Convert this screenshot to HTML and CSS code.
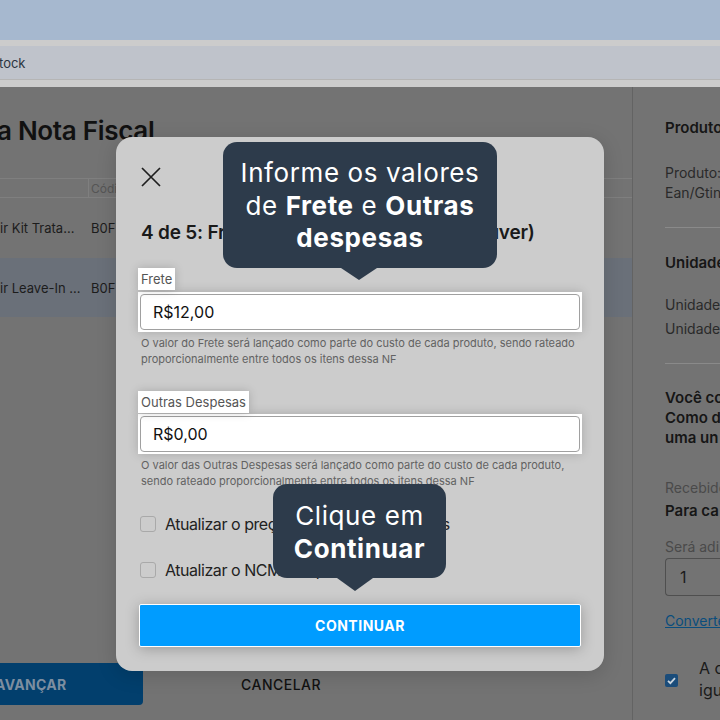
FILE: index.html
```html
<!DOCTYPE html>
<html lang="pt-BR">
<head>
<meta charset="utf-8">
<title>Nota Fiscal</title>
<link rel="stylesheet" href="styles.css">
</head>
<body>
<div class="topbar"></div>
<div class="tabstrip"><span class="tab-text">tock</span></div>
<div class="app">
  <main class="main">
    <h1 class="page-title">a Nota Fiscal</h1>
    <div class="table">
      <div class="trow thead">
        <div class="c1"></div>
        <div class="c2">Códi</div>
      </div>
      <div class="trow">
        <div class="c1">ir Kit Trata...</div>
        <div class="c2">B0F</div>
      </div>
      <div class="trow selected">
        <div class="c1">ir Leave-In ...</div>
        <div class="c2">B0F</div>
      </div>
    </div>
    <div class="bottombar">
      <div class="btn-advance"><span>AVANÇAR</span></div>
      <div class="btn-cancel">CANCELAR</div>
    </div>
  </main>
  <aside class="side">
    <div class="s-bold s-first">Produto</div>
    <div class="s-text s-gap25">Produto:</div>
    <div class="s-text">Ean/Gtin</div>
    <div class="s-hr"></div>
    <div class="s-bold s-gap25">Unidade</div>
    <div class="s-text s-gap22">Unidade</div>
    <div class="s-text s-gap4">Unidade</div>
    <div class="s-hr"></div>
    <div class="s-bold s-gap24">Você co<br>Como d<br>uma un</div>
    <div class="s-gray s-gap30">Recebido</div>
    <div class="s-bold s-gap3">Para ca</div>
    <div class="s-gray s-gap17">Será adi</div>
    <div class="s-input">1</div>
    <div class="s-link">Converte</div>
    <div class="s-check">
      <span class="s-checkbox"><svg width="13" height="13" viewBox="0 0 13 13"><path d="M3 6.8 L5.4 9.1 L10 4.2" fill="none" stroke="#c9d4de" stroke-width="1.8"/></svg></span>
      <span class="s-check-text">A c<br>igu</span>
    </div>
  </aside>
</div>

<div class="modal">
  <div class="close"><svg width="20" height="20" viewBox="0 0 20 20"><path d="M1 1 L19 19 M19 1 L1 19" stroke="#1e1e1e" stroke-width="1.7" fill="none"/></svg></div>
  <div class="m-title">4 de 5: Frete e Outras Despesas (se houver)</div>

  <div class="m-label m-label-first">Frete</div>
  <div class="m-input-wrap"><div class="m-input">R$12,00</div></div>
  <div class="m-help">O valor do Frete será lançado como parte do custo de cada produto, sendo rateado proporcionalmente entre todos os itens dessa NF</div>

  <div class="m-label m-label-second">Outras Despesas</div>
  <div class="m-input-wrap"><div class="m-input">R$0,00</div></div>
  <div class="m-help">O valor das Outras Despesas será lançado como parte do custo de cada produto, sendo rateado proporcionalmente entre todos os itens dessa NF</div>

  <div class="m-check m-check-first"><span class="m-box"></span><span>Atualizar o preço de custo dos produtos</span></div>
  <div class="m-check m-check-second"><span class="m-box"></span><span>Atualizar o NCM dos produtos</span></div>

  <div class="m-button">CONTINUAR</div>
</div>

<div class="tip tip-one">Informe os valores<br>de <b>Frete</b> e <b>Outras</b><br><b>despesas</b></div>
<div class="tip tip-two">Clique em<br><b>Continuar</b></div>
</body>
</html>
```
FILE: styles.css
```css
* { box-sizing: border-box; }
html, body { margin: 0; padding: 0; }
body {
  width: 720px;
  height: 720px;
  overflow: hidden;
  position: relative;
  font-family: Inter, "Noto Sans", "Liberation Sans", sans-serif;
  background: #737373;
}
.topbar { height: 40px; background: #a6b8cf; }
.tabstrip {
  height: 47px;
  background: #bfc3cb;
  border-top: 6px solid #cccccc;
  border-bottom: 7px solid #cccccc;
  box-shadow: inset 0 -1px 0 #b5b5b5;
  display: flex;
  align-items: center;
  font-size: 13px;
  color: #2b3440;
}
.tab-text { margin-left: -1px; }

.app { display: flex; height: 633px; }
.main {
  width: 632px;
  display: flex;
  flex-direction: column;
  padding-top: 28px;
}
.page-title {
  margin: 0;
  font-size: 26px;
  line-height: 32px;
  font-weight: 600;
  color: #111;
  letter-spacing: -0.3px;
  margin-left: -3px;
}
.table { margin-top: 31px; }
.trow {
  display: flex;
  align-items: center;
  height: 60px;
  font-size: 13px;
  color: #1c1c1c;
}
.trow.thead {
  height: 20px;
  border-top: 1px solid #7f7f7f;
  border-bottom: 1px solid #7f7f7f;
  font-size: 12px;
  color: #555;
}
.trow.thead .c1 { border-right: 1px solid #7f7f7f; height: 100%; }
.trow.selected { background: #6a7079; height: 59px; }
.c1 { width: 89px; padding-left: 0; }
.c2 { padding-left: 2px; }

.bottombar {
  margin-top: auto;
  display: flex;
  align-items: center;
  padding-bottom: 15px;
}
.btn-advance {
  width: 143px;
  height: 42px;
  background: #023f6d;
  border-radius: 0 4px 4px 0;
  display: flex;
  align-items: center;
  font-weight: 700;
  font-size: 14px;
  color: #7d8ea0;
  letter-spacing: 0.3px;
}
.btn-advance span { margin-left: -5px; }
.btn-cancel {
  margin-left: 98px;
  font-size: 14px;
  font-weight: 500;
  color: #111;
  letter-spacing: 0.5px;
}

.side {
  flex: 1;
  border-left: 1px solid #636363;
  padding-left: 32px;
  padding-top: 31px;
  font-size: 14px;
  line-height: 20px;
  white-space: nowrap;
  overflow: hidden;
}
.s-bold { font-weight: 600; color: #161616; font-size: 15px; }
.s-text { color: #2a2a2a; }
.s-gray { color: #4a4a4a; }
.s-gap25 { margin-top: 25px; }
.s-gap22 { margin-top: 22px; }
.s-gap4 { margin-top: 4px; }
.s-gap24 { margin-top: 24px; }
.s-gap30 { margin-top: 30px; }
.s-gap3 { margin-top: 3px; }
.s-gap17 { margin-top: 16px; }
.s-hr { height: 1px; background: #8a8a8a; margin-top: 24px; }
.s-input {
  margin-top: 1px;
  height: 38px;
  width: 80px;
  border: 1px solid #4f4f4f;
  border-right: none;
  border-radius: 4px 0 0 4px;
  padding-left: 14px;
  display: flex;
  align-items: center;
  font-size: 16px;
  color: #1c1c1c;
}
.s-link {
  margin-top: 15px;
  color: #0a4d7d;
  text-decoration: underline;
}
.s-check {
  margin-top: 26px;
  display: flex;
  align-items: center;
}
.s-checkbox {
  width: 13px;
  height: 13px;
  border-radius: 2px;
  background: #1a4c7a;
  display: flex;
  margin-top: 2px;
}
.s-check-text {
  margin-left: 21px;
  font-size: 16px;
  line-height: 22px;
  color: #1a1a1a;
}

.modal {
  position: absolute;
  left: 116px;
  top: 137px;
  width: 488px;
  height: 534px;
  background: #cccccc;
  border-radius: 16px;
  padding: 30px 22px 24px 22px;
  display: flex;
  flex-direction: column;
  box-shadow: 0 4px 20px rgba(0,0,0,0.15);
}
.close { height: 20px; margin-left: 3px; display: flex; }
.m-title {
  margin-top: 34px;
  margin-left: 3px;
  font-size: 19px;
  line-height: 24px;
  font-weight: 600;
  color: #1a1a1a;
  letter-spacing: -0.2px;
  white-space: nowrap;
}
.m-label {
  align-self: flex-start;
  background: #fff;
  font-size: 13px;
  line-height: 22px;
  padding: 0 3px;
  color: #555;
  box-shadow: 0 0 10px rgba(0,0,0,0.18);
  position: relative;
}
.m-label-first { margin-top: 23px; margin-bottom: 2px; }
.m-label-second { margin-top: 24px; margin-bottom: 1px; }
.m-input-wrap {
  background: #fff;
  padding: 2px;
  height: 40px;
  box-shadow: 0 0 10px rgba(0,0,0,0.18);
}
.m-input {
  height: 36px;
  border: 1px solid #a0a0a0;
  border-radius: 4px;
  padding-left: 12px;
  display: flex;
  align-items: center;
  font-size: 16px;
  color: #111;
}
.m-help {
  margin-top: 4px;
  padding-left: 3px;
  font-size: 11px;
  line-height: 15.5px;
  color: #626262;
}
.m-check {
  display: flex;
  align-items: center;
  height: 24px;
  font-size: 16px;
  color: #222;
  letter-spacing: -0.45px;
  white-space: nowrap;
}
.m-check-first { margin-top: 23px; }
.m-check-second { margin-top: 22px; }
.m-box {
  width: 16px;
  height: 16px;
  border: 1px solid #a9a9a9;
  border-radius: 3px;
  margin-left: 2px;
  margin-right: 9px;
}
.m-button {
  margin: 22px 1px 0 1px;
  height: 43px;
  background: #009cff;
  border: 1px solid #fff;
  border-radius: 2px;
  display: flex;
  align-items: center;
  justify-content: center;
  color: #fff;
  font-weight: 700;
  font-size: 14px;
  letter-spacing: 0.5px;
  box-shadow: 0 2px 14px rgba(0,0,0,0.25);
}

.tip {
  position: absolute;
  background: #2d3b4b;
  color: #fff;
  border-radius: 14px;
  text-align: center;
  font-size: 26px;
  line-height: 32.5px;
  letter-spacing: 0.6px;
  font-weight: 400;
}
.tip b { font-weight: 700; letter-spacing: 0.6px; }
.tip::after {
  content: "";
  position: absolute;
  left: 50%;
  bottom: -12px;
  margin-left: -18px;
  border-left: 18px solid transparent;
  border-right: 18px solid transparent;
  border-top: 12px solid #2d3b4b;
}
.tip-one {
  left: 223px;
  top: 142px;
  width: 274px;
  height: 126px;
  padding-top: 15px;
}
.tip-one::after { margin-left: -19px; }
.tip-two {
  left: 273px;
  top: 484px;
  width: 173px;
  height: 94px;
  padding-top: 16px;
}
.tip-two::after { margin-left: -23px; bottom: -13px; border-top-width: 13px; }
```
